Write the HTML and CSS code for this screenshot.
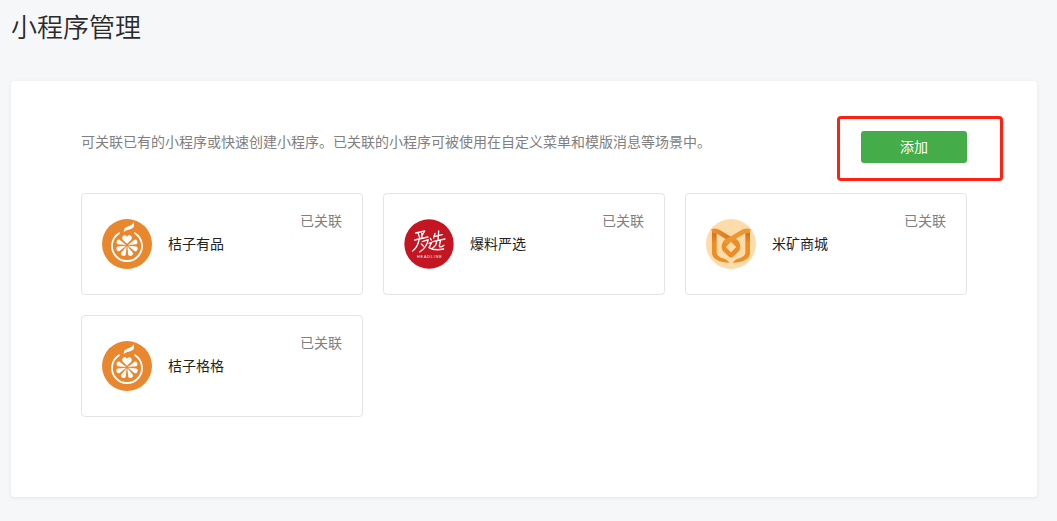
FILE: index.html
```html
<!DOCTYPE html>
<html lang="zh-CN">
<head>
<meta charset="utf-8">
<title>小程序管理</title>
<link rel="stylesheet" href="styles.css">
</head>
<body>
<svg width="0" height="0" class="defs" aria-hidden="true">
  <symbol id="orange" viewBox="15 15 150 150">
    <circle cx="90" cy="90" r="75" fill="#e9872e"/>
    <path d="M66 58A45 45 0 1 0 114 58" fill="none" stroke="#fff" stroke-width="5.500" stroke-linecap="round"/>
    <path d="M81 54C79 45 85 40 94 37C102 34 108 31 109 25C115 37 108 43 100 46C91 48 86 49 81 54Z" fill="#fff"/>
    <path d="M90 89L78 78C72 70 78 62 85 64C88 65 89 67 90 69C91 67 92 65 95 64C102 62 108 70 102 78Z" fill="#fff"/>
    <g fill="#fff">
      <path d="M90 97L82.500 121C81 130 99 130 97.500 121Z" transform="rotate(-23 90 94)"/>
      <path d="M90 97L82.500 121C81 130 99 130 97.500 121Z" transform="rotate(23 90 94)"/>
      <path d="M90 97L82.500 121C81 130 99 130 97.500 121Z" transform="rotate(68 90 94)"/>
      <path d="M90 97L82.500 121C81 130 99 130 97.500 121Z" transform="rotate(-68 90 94)"/>
      <path d="M90 97L83 121C82 129 98 129 97 121Z" transform="rotate(112 90 94)"/>
      <path d="M90 97L83 121C82 129 98 129 97 121Z" transform="rotate(-112 90 94)"/>
    </g>
  </symbol>
</svg>
<h1 class="title">小程序管理</h1>
<main class="panel">
  <header class="toolbar">
    <p class="desc">可关联已有的小程序或快速创建小程序。已关联的小程序可被使用在自定义菜单和模版消息等场景中。</p>
    <div class="action"><button class="add">添加</button></div>
  </header>
  <section class="grid">
    <article class="card">
      <svg class="logo"><use href="#orange"/></svg>
      <span class="name">桔子有品</span><span class="status">已关联</span>
    </article>
    <article class="card">
      <svg class="logo" viewBox="15 15 150 150">
        <circle cx="90" cy="90" r="74" fill="#c31522"/>
        <g fill="none" stroke="#fff" stroke-linecap="round" stroke-linejoin="round" stroke-width="4">
          <path d="M50 57L77 51L69 65M58 59L62 72M68 58L69 73M47 78L87 69M60 78C57 93 50 104 41 111M70 83L88 77C84 94 75 106 62 114M67 90L73 96"/>
          <path d="M108 58L104 72M104 68L130 62M119 51L117 80M101 83L138 75M113 83C112 92 108 98 101 102M124 81L121 96C121 101 131 98 135 94M94 73L97 78M90 88L98 85L90 101C101 108 116 109 134 105"/>
        </g>
        <text class="logo-caption" x="54" y="131" textLength="74">HEADLINE</text>
      </svg>
      <span class="name">爆料严选</span><span class="status">已关联</span>
    </article>
    <article class="card">
      <svg class="logo" viewBox="15 15 150 150">
        <defs>
          <linearGradient id="ribbon" x2="1"><stop stop-color="#ef9128"/><stop offset="1" stop-color="#d9751f"/></linearGradient>
          <linearGradient id="side" x2="0" y2="1"><stop stop-color="#cf641f"/><stop offset=".4" stop-color="#ec8d26"/></linearGradient>
        </defs>
        <circle cx="90" cy="90" r="75" fill="#fddcac"/>
        <path d="M33 48H47V116Q48 127 60 131Q76 134 86 146Q62 146 48 138Q33 131 33 116Z" fill="url(#side)"/>
        <path d="M147 48H133V116Q132 127 120 131Q104 134 94 146Q118 146 132 138Q147 131 147 116Z" fill="url(#side)"/>
        <path d="M33 52Q43 48 53 54L91 77" fill="none" stroke="url(#ribbon)" stroke-width="14"/>
        <path fill-rule="evenodd" d="M90 70C106 70 118 84 118 99C118 107 114 112 108 117L96 128Q90 133 84 128L72 117C66 112 62 107 62 99C62 84 74 70 90 70ZM90 84L75 99L90 114L105 99Z" fill="#ec8d26"/>
        <path d="M71 86L127 53Q137 48 147 52" fill="none" stroke="#ee9630" stroke-width="14"/>
        <path d="M90 84L75 99L90 114L105 99Z" fill="#fddcac"/>
      </svg>
      <span class="name">米矿商城</span><span class="status">已关联</span>
    </article>
    <article class="card">
      <svg class="logo"><use href="#orange"/></svg>
      <span class="name">桔子格格</span><span class="status">已关联</span>
    </article>
  </section>
</main>
</body>
</html>
```
FILE: styles.css
```css
* { box-sizing: border-box; }
body {
  margin: 0;
  height: 521px;
  padding: 6px 20px 0 11px;
  background: #f6f7f9;
  color: #222;
  font: 14px/22px "Noto Sans CJK SC", sans-serif;
}
.defs { display: block; width: 0; height: 0; }
.title {
  margin: 0 0 35px;
  color: #2a2a2a;
  font-size: 26px;
  font-weight: 350;
  line-height: 40px;
}
.panel {
  height: 416px;
  padding: 35px 34px 0 70px;
  border-radius: 4px;
  background: #fff;
  box-shadow: 0 1px 4px rgba(0, 0, 0, .07);
}
.toolbar {
  display: flex;
  justify-content: space-between;
  height: 65px;
}
.desc {
  margin: 14px 0 0;
  color: #808080;
  white-space: nowrap;
}
.action {
  width: 166px;
  height: 65px;
  padding: 12px 0 0 21px;
  border: 3px solid #fd2114;
  border-radius: 4px;
}
.add {
  display: block;
  width: 106px;
  height: 32px;
  padding: 0 0 2px;
  border: 0;
  border-radius: 3px;
  background: #44ad49;
  color: #fff;
  font: 14px/30px "Noto Sans CJK SC", sans-serif;
}
.grid {
  display: grid;
  grid-template-columns: repeat(3, 282px);
  grid-auto-rows: 102px;
  gap: 20px;
  margin-top: 12px;
}
.card {
  display: flex;
  align-items: center;
  padding: 0 20px;
  border: 1px solid #e3e4e6;
  border-radius: 4px;
}
.logo {
  flex: none;
  width: 50px;
  height: 50px;
  margin-right: 16px;
}
.logo-caption {
  fill: #fff;
  font: 11px "Liberation Sans", sans-serif;
}
.name { padding-bottom: 2px; }
.status {
  align-self: flex-start;
  margin: 15px 0 0 auto;
  color: #808080;
}
```
